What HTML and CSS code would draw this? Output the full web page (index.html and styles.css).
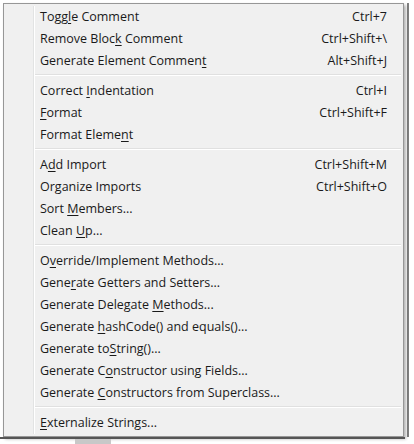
FILE: index.html
```html
<!DOCTYPE html>
<html>
<head>
<meta charset="utf-8">
<link rel="stylesheet" href="styles.css">
</head>
<body>
<div class="stage">
  <div class="menu">
    <div class="group">
      <div class="item"><span class="label">Togg<u>l</u>e Comment</span><span class="key">Ctrl+7</span></div>
      <div class="item"><span class="label">Remove Bloc<u>k</u> Comment</span><span class="key">Ctrl+Shift+\</span></div>
      <div class="item"><span class="label">Generate Element Commen<u>t</u></span><span class="key">Alt+Shift+J</span></div>
    </div>
    <div class="sep"></div>
    <div class="group">
      <div class="item"><span class="label">Correct <u>I</u>ndentation</span><span class="key">Ctrl+I</span></div>
      <div class="item"><span class="label"><u>F</u>ormat</span><span class="key">Ctrl+Shift+F</span></div>
      <div class="item"><span class="label">Format Eleme<u>n</u>t</span></div>
    </div>
    <div class="sep"></div>
    <div class="group">
      <div class="item"><span class="label">A<u>d</u>d Import</span><span class="key">Ctrl+Shift+M</span></div>
      <div class="item"><span class="label">Or<u>g</u>anize Imports</span><span class="key">Ctrl+Shift+O</span></div>
      <div class="item"><span class="label">Sort <u>M</u>embers...</span></div>
      <div class="item"><span class="label">Clean <u>U</u>p...</span></div>
    </div>
    <div class="sep"></div>
    <div class="group">
      <div class="item"><span class="label">O<u>v</u>erride/Implement Methods...</span></div>
      <div class="item"><span class="label">Gene<u>r</u>ate Getters and Setters...</span></div>
      <div class="item"><span class="label">Generate Delegate <u>M</u>ethods...</span></div>
      <div class="item"><span class="label">Generate <u>h</u>ashCode() and equals()...</span></div>
      <div class="item"><span class="label">Generate to<u>S</u>tring()...</span></div>
      <div class="item"><span class="label">Generate C<u>o</u>nstructor using Fields...</span></div>
      <div class="item"><span class="label">Generate <u>C</u>onstructors from Superclass...</span></div>
    </div>
    <div class="sep"></div>
    <div class="group">
      <div class="item"><span class="label"><u>E</u>xternalize Strings...</span></div>
    </div>
  </div>
  <div class="edge"></div>
</div>
<div class="floor"><div class="tab"></div></div>
</body>
</html>
```
FILE: styles.css
```css
html, body {
  margin: 0;
  padding: 0;
  background: #ffffff;
}
body {
  width: 414px;
  height: 444px;
  overflow: hidden;
  font-family: "Open Sans", "Noto Sans", sans-serif;
  font-size: 12.5px;
  color: #1a1a1a;
}
.stage {
  display: flex;
  align-items: stretch;
  padding: 3px 0 0 3px;
  height: 434px;
}
.menu {
  position: relative;
  width: 401px;
  border: 1px solid #979797;
  background: #f0f0f0;
  padding: 1px 0 2px 0;
  box-shadow: 2px 2px 3px rgba(0, 0, 0, 0.3);
  box-sizing: border-box;
  height: 434px;
}
.menu::before {
  content: "";
  position: absolute;
  left: 29px;
  top: 2px;
  bottom: 2px;
  width: 1px;
  background: #e2e3e3;
  border-right: 1px solid #ffffff;
}
.item {
  display: flex;
  justify-content: space-between;
  align-items: center;
  height: 22px;
  padding: 0 16px 0 36px;
  white-space: nowrap;
}
.item u {
  text-decoration: underline;
  text-underline-offset: 2px;
}
.sep {
  height: 8px;
  display: flex;
  flex-direction: column;
  justify-content: center;
  margin-left: 29px;
  margin-right: 2px;
}
.sep::before {
  content: "";
  display: block;
  height: 1px;
  background: #e0e0e0;
  border-bottom: 1px solid #ffffff;
}
.edge {
  margin-left: 3px;
  width: 2px;
  background: #808080;
}
.floor {
  height: 7px;
  border-top: 2px solid #555;
  width: 405px;
  position: relative;
}
.tab {
  position: absolute;
  left: 75px;
  top: 0;
  width: 36px;
  height: 5px;
  background: #c8c8c8;
}
```
